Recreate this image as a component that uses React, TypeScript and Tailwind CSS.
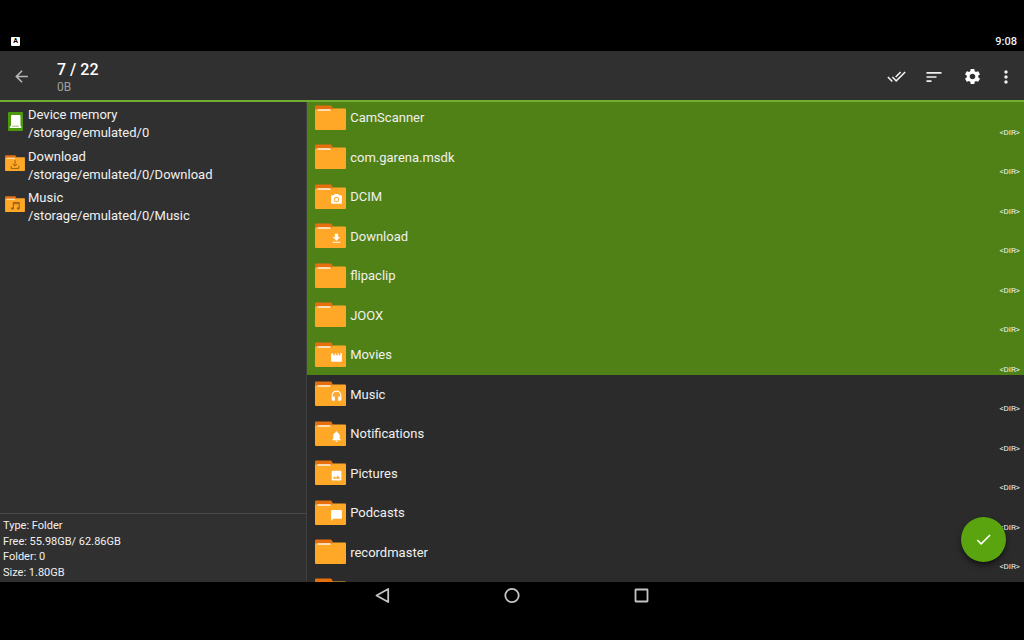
import type { ReactNode } from 'react'
import type { IconType } from 'react-icons'
import {
  MdArrowBack,
  MdChatBubble,
  MdCheck,
  MdDoneAll,
  MdFileDownload,
  MdHeadset,
  MdImage,
  MdMoreVert,
  MdMovie,
  MdNotifications,
  MdPhotoCamera,
  MdSettings,
  MdSort,
} from 'react-icons/md'

type Folder = { name: string; badge?: IconType; selected?: boolean }

const folders: Folder[] = [
  { name: 'CamScanner', selected: true },
  { name: 'com.garena.msdk', selected: true },
  { name: 'DCIM', badge: MdPhotoCamera, selected: true },
  { name: 'Download', badge: MdFileDownload, selected: true },
  { name: 'flipaclip', selected: true },
  { name: 'JOOX', selected: true },
  { name: 'Movies', badge: MdMovie, selected: true },
  { name: 'Music', badge: MdHeadset },
  { name: 'Notifications', badge: MdNotifications },
  { name: 'Pictures', badge: MdImage },
  { name: 'Podcasts', badge: MdChatBubble },
  { name: 'recordmaster' },
]

const info = ['Type: Folder', 'Free: 55.98GB/ 62.86GB', 'Folder: 0', 'Size: 1.80GB']

function FolderIcon({ className, children }: { className: string; children?: ReactNode }) {
  return (
    <svg viewBox="0 0 31 25" className={className} aria-hidden="true">
      <path d="M0 1.5Q0 .5 1 .5h14.500q.8 0 1.200.8L18 4H0z" fill="#e66f0e" />
      <path d="M0 3.500h30q1 0 1 1V24q0 1-1 1H1q-1 0-1-1z" fill="#ffa726" />
      <path d="M0 2.800h17.500v1.700H0z" fill="#e66f0e" />
      <path d="M3 5h12" stroke="#fff5e6" strokeWidth="1.500" strokeLinecap="round" />
      {children}
    </svg>
  )
}

function DeviceIcon() {
  return (
    <svg viewBox="0 0 15 19" className="h-[19px] w-[15px]" aria-hidden="true">
      <rect width="15" height="19" rx="1" fill="#4c9a0c" />
      <path d="M4 3h7.500q1 0 1 1v9.500l1 1.500q0 1-1 1h-10q-1 0-1-1L3 13.500V4q0-1 1-1z" fill="#fff" />
      <path d="M4 14.200h7" stroke="#7cb342" strokeWidth=".8" />
    </svg>
  )
}

const places = [
  { name: 'Device memory', path: '/storage/emulated/0', icon: <DeviceIcon /> },
  {
    name: 'Download',
    path: '/storage/emulated/0/Download',
    icon: (
      <FolderIcon className="h-4 w-5">
        <path
          d="M15.500 8v9M12 14l3.500 3.500L19 14M9.500 17v4h12v-4"
          fill="none"
          stroke="#9a5f10"
          strokeWidth="1.500"
        />
      </FolderIcon>
    ),
  },
  {
    name: 'Music',
    path: '/storage/emulated/0/Music',
    icon: (
      <FolderIcon className="h-4 w-5">
        <path d="M13 19.500V10h9v9.500M13 12h9" fill="none" stroke="#9a5f10" strokeWidth="1.600" />
        <circle cx="11.500" cy="19.500" r="2" fill="#9a5f10" />
        <circle cx="20.500" cy="19.500" r="2" fill="#9a5f10" />
      </FolderIcon>
    ),
  },
]

function Header() {
  return (
    <header className="flex h-[51px] shrink-0 items-center border-b-2 border-[#70ae30] bg-[#303030] pt-[2px] pr-1">
      <button aria-label="Back" className="flex w-[42px] justify-center text-[#b8b8b8]">
        <MdArrowBack size={19} />
      </button>
      <div className="ml-[15px] flex-1 pt-[2px]">
        <h1 className="text-base leading-[18px] font-medium text-white">7 / 22</h1>
        <p className="text-xs leading-4 text-[#a0a0a0]">0B</p>
      </div>
      <button aria-label="Select all" className="flex w-[38px] justify-center">
        <MdDoneAll size={19} />
      </button>
      <button aria-label="Sort" className="flex w-[38px] justify-center">
        <MdSort size={20} />
      </button>
      <button aria-label="Settings" className="flex w-[39px] justify-center text-white">
        <MdSettings size={19} />
      </button>
      <button aria-label="More" className="flex w-7 justify-center">
        <MdMoreVert size={20} />
      </button>
    </header>
  )
}

function Sidebar() {
  return (
    <aside className="flex w-[30%] shrink-0 flex-col border-r border-[#404040] bg-[#303030]">
      <ul className="flex-1 pt-1">
        {places.map((place) => (
          <li key={place.name} className="h-[42px] even:h-[41px]">
            <button className="flex w-full items-center text-left text-[13px]">
              <span className="ml-[5px] flex w-5 justify-center pb-[6px]">{place.icon}</span>
              <span className="ml-[3px] leading-[18px]">
                <span className="block">{place.name}</span>
                <span className="block">{place.path}</span>
              </span>
            </button>
          </li>
        ))}
      </ul>
      <ul className="border-t border-[#484848] px-[3px] pt-1 pb-[2px] text-[11px] leading-4">
        {info.map((line) => (
          <li key={line} className="h-4 even:h-[15px]">
            {line}
          </li>
        ))}
      </ul>
    </aside>
  )
}

function FolderRow({ folder }: { folder: Folder }) {
  const Badge = folder.badge
  return (
    <li className={folder.selected ? 'h-10 bg-[#508117] even:h-[39px]' : 'h-10 even:h-[39px]'}>
      <button className="flex h-full w-full items-center pr-1 pl-2 text-left text-[13px]">
        <span className="pb-[2px]">
          <FolderIcon className="h-[25px] w-[31px]">
            {Badge && <Badge x={15} y={9} size={13} color="#fff" />}
          </FolderIcon>
        </span>
        <span className="ml-1 flex-1">{folder.name}</span>
        <span className="self-end text-[8px] leading-[10px]">&lt;DIR&gt;</span>
      </button>
    </li>
  )
}

export default function App() {
  return (
    <div className="flex h-screen flex-col overflow-hidden bg-black font-[Roboto,sans-serif] text-[#f0f0f0]">
      <div className="flex h-[51px] shrink-0 items-end justify-between pr-[7px] pb-[3px] pl-[11px]">
        <span className="mb-[2px] flex h-[9px] w-[9px] items-center justify-center rounded-[1px] bg-white text-[7px] leading-none font-bold text-black">
          A
        </span>
        <span className="text-[11px] leading-3 font-medium">9:08</span>
      </div>
      <Header />
      <div className="flex min-h-0 flex-1">
        <Sidebar />
        <main className="relative flex-1 overflow-hidden bg-[#2b2b2b]">
          <ul className="-mt-1">
            {folders.map((folder) => (
              <FolderRow key={folder.name} folder={folder} />
            ))}
            {/* next row, only the folder tab shows above the fold */}
            <li className="h-10 pt-[6px] pl-2">
              <FolderIcon className="h-[25px] w-[31px]" />
            </li>
          </ul>
          <button
            aria-label="Confirm"
            className="absolute right-[18px] bottom-5 flex h-[45px] w-[45px] items-center justify-center rounded-full bg-[#5aa50f] text-white shadow-md shadow-black/50"
          >
            <MdCheck size={19} />
          </button>
        </main>
      </div>
      <nav className="flex h-[58px] shrink-0 items-start justify-center gap-[110px] pt-1 text-[#c4c4c4]">
        <button aria-label="Back">
          <svg viewBox="0 0 20 20" className="h-5 w-5" fill="none" stroke="currentColor" strokeWidth="1.800">
            <path d="M4.500 9.500 16.200 3v13z" strokeLinejoin="round" />
          </svg>
        </button>
        <button aria-label="Home">
          <svg viewBox="0 0 20 20" className="h-5 w-5" fill="none" stroke="currentColor" strokeWidth="1.800">
            <circle cx="10" cy="9.500" r="6.700" />
          </svg>
        </button>
        <button aria-label="Recent apps">
          <svg viewBox="0 0 20 20" className="h-5 w-5" fill="none" stroke="currentColor" strokeWidth="1.800">
            <rect x="3.500" y="3.500" width="12" height="12" rx=".5" />
          </svg>
        </button>
      </nav>
    </div>
  )
}
